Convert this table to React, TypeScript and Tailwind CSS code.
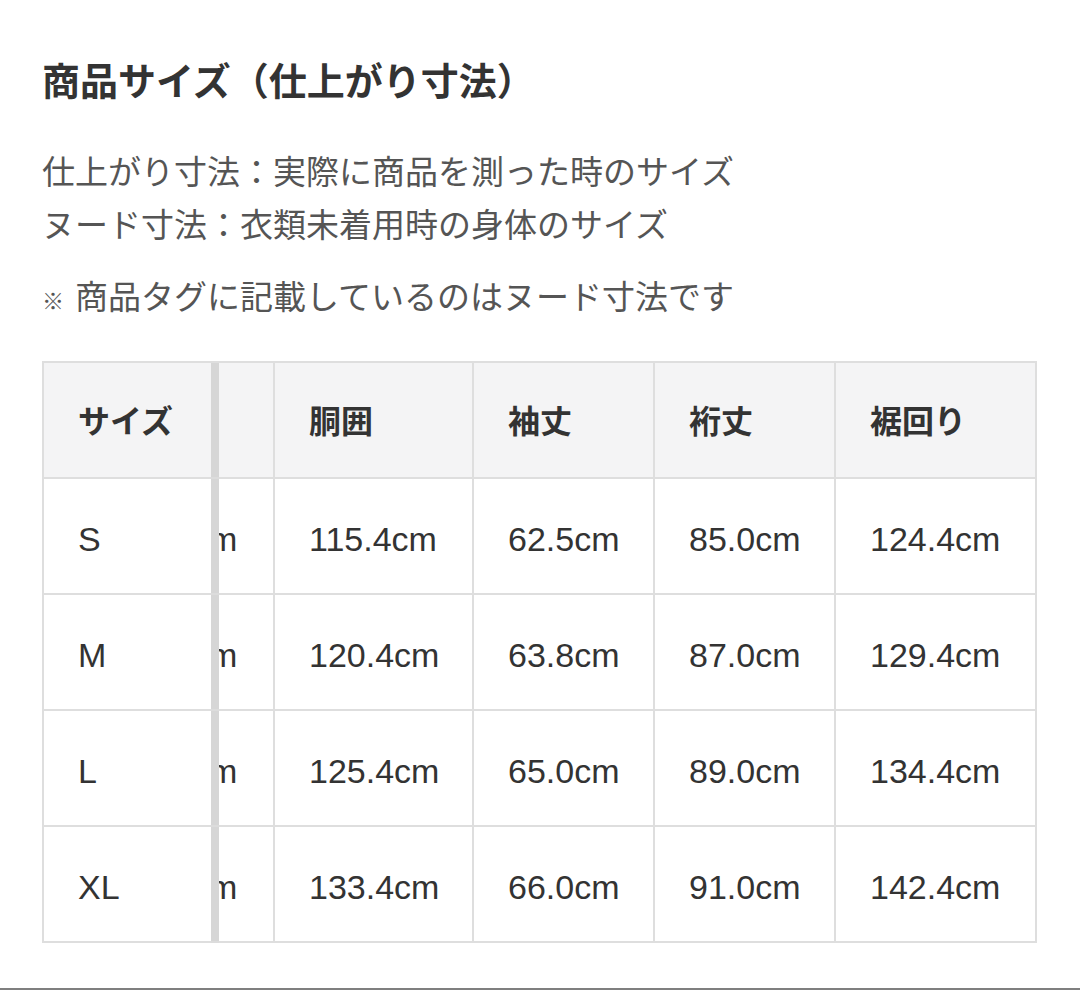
const font = { fontFamily: '"Liberation Sans", "Noto Sans CJK JP", sans-serif' };

interface Row {
  size: string;
  body: string;
  sleeve: string;
  yuki: string;
  hem: string;
}

const rows: Row[] = [
  { size: "S", body: "115.4cm", sleeve: "62.5cm", yuki: "85.0cm", hem: "124.4cm" },
  { size: "M", body: "120.4cm", sleeve: "63.8cm", yuki: "87.0cm", hem: "129.4cm" },
  { size: "L", body: "125.4cm", sleeve: "65.0cm", yuki: "89.0cm", hem: "134.4cm" },
  { size: "XL", body: "133.4cm", sleeve: "66.0cm", yuki: "91.0cm", hem: "142.4cm" },
];

function TableRow({ cells, head }: { cells: string[]; head?: boolean }) {
  const base =
    "h-[116px] flex items-center border-b-2 border-[#dedede] " +
    (head
      ? "pt-[4px] bg-[#f4f4f5] font-bold text-[32px] text-[#333]"
      : "pt-[6px] bg-white text-[34px] text-[#333]");
  const cell = base + " pl-[34px] border-r-2";
  return (
    <div className="flex">
      <div className={base + " pl-[34px] w-[167px]"}>{cells[0]}</div>
      <div className="w-[8px] h-[116px] bg-[#d6d6d6] border-b-2 border-[#dcdcdc]" />
      <div className={base + " border-r-2 w-[56px] overflow-hidden"}>
        {!head && <span className="ml-[-10px]">m</span>}
      </div>
      <div className={cell + " w-[199px]"}>{cells[1]}</div>
      <div className={cell + " w-[181px]"}>{cells[2]}</div>
      <div className={cell + " w-[181px]"}>{cells[3]}</div>
      <div className={cell + " w-[201px]"}>{cells[4]}</div>
    </div>
  );
}

export default function App() {
  return (
    <div style={font} className="h-[990px] bg-white flex flex-col">
      <div className="px-[42px] pt-[62px]">
        <h1 className="text-[38px] leading-[40px] font-bold text-[#333]">
          商品サイズ（仕上がり寸法）
        </h1>
        <div className="mt-[44px] text-[33px] leading-[53px] text-[#555]">
          <p>仕上がり寸法：実際に商品を測った時のサイズ</p>
          <p>ヌード寸法：衣類未着用時の身体のサイズ</p>
        </div>
        <p className="mt-[19px] text-[33px] leading-[53px] text-[#555]">
          <span className="text-[22px] mr-[11px]">※</span>商品タグに記載しているのはヌード寸法です
        </p>
        <div className="mt-[33px] w-[995px] border-t-2 border-l-2 border-[#dedede]">
          <TableRow head cells={["サイズ", "胴囲", "袖丈", "裄丈", "裾回り"]} />
          {rows.map((r) => (
            <TableRow key={r.size} cells={[r.size, r.body, r.sleeve, r.yuki, r.hem]} />
          ))}
        </div>
      </div>
      <div className="mt-auto h-[2px] bg-[#7f7f7f]" />
    </div>
  );
}
